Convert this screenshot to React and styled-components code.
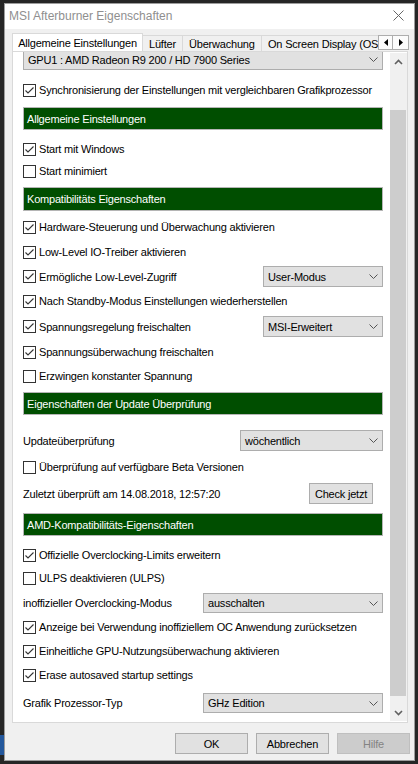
import styled, { createGlobalStyle } from 'styled-components';

const Global = createGlobalStyle`
  html, body { margin: 0; padding: 0; }
  body {
    background: #262626;
    font-family: "Liberation Sans", Arial, sans-serif;
    font-size: 11px;
    letter-spacing: -0.2px;
    color: #000;
  }
`;

function Check({ on }) {
  return (
    <Box>
      {on && (
        <svg width="11" height="11" viewBox="0 0 11 11">
          <path d="M1.5 5.5 L4 8 L9.5 2.5" fill="none" stroke="#333" strokeWidth="1.1" />
        </svg>
      )}
    </Box>
  );
}

function Chevron() {
  return (
    <svg width="9" height="5" viewBox="0 0 9 5">
      <path d="M0.5 0.5 L4.5 4.5 L8.5 0.5" fill="none" stroke="#555" strokeWidth="1" />
    </svg>
  );
}

function Select({ w, children }) {
  return (
    <SelectBox $w={w}>
      <span>{children}</span>
      <Chevron />
    </SelectBox>
  );
}

function CheckRow({ mt, on, children, right }) {
  return (
    <Row $mt={mt} $h={right ? 21 : 20}>
      <Label>
        <Check on={on} />
        {children}
      </Label>
      {right}
    </Row>
  );
}

function App() {
  return (
    <Desktop>
      <Global />
      <Gutter>
        <TaskStrip />
      </Gutter>
      <WindowFrame>
        <TitleBar>
          <span>MSI Afterburner Eigenschaften</span>
          <svg width="11" height="11" viewBox="0 0 11 11">
            <path d="M0.5 0.5 L10.5 10.5 M10.5 0.5 L0.5 10.5" stroke="#666" strokeWidth="1" />
          </svg>
        </TitleBar>
        <Body>
          <TabRow>
            <TabsViewport>
              <Tab $active $w={131}>Allgemeine Einstellungen</Tab>
              <Tab $w={40}>Lüfter</Tab>
              <Tab $w={79}>Überwachung</Tab>
              <Tab $w={130}>On Screen Display (OSD)</Tab>
            </TabsViewport>
            <TabArrows>
              <ArrowBtn>
                <svg width="4" height="7" viewBox="0 0 4 7"><path d="M4 0 L0 3.5 L4 7 Z" fill="#000" /></svg>
              </ArrowBtn>
              <ArrowBtn>
                <svg width="4" height="7" viewBox="0 0 4 7"><path d="M0 0 L4 3.5 L0 7 Z" fill="#000" /></svg>
              </ArrowBtn>
            </TabArrows>
          </TabRow>
          <Panel>
            <Content>
              <Row $mt={-3} $h={21}>
                <Select w={360}>GPU1 : AMD Radeon R9 200 / HD 7900 Series</Select>
              </Row>
              <CheckRow mt={10} on>Synchronisierung der Einstellungen mit vergleichbaren Grafikprozessor</CheckRow>
              <Header $mt={7}>Allgemeine Einstellungen</Header>
              <CheckRow mt={9} on>Start mit Windows</CheckRow>
              <CheckRow mt={2}>Start minimiert</CheckRow>
              <Header $mt={6} $h={24}>Kompatibilitäts Eigenschaften</Header>
              <CheckRow mt={6} on>Hardware-Steuerung und Überwachung aktivieren</CheckRow>
              <CheckRow mt={5} on>Low-Level IO-Treiber aktivieren</CheckRow>
              <CheckRow mt={4} on right={<Select w={120}>User-Modus</Select>}>Ermögliche Low-Level-Zugriff</CheckRow>
              <CheckRow mt={4} on>Nach Standby-Modus Einstellungen wiederherstellen</CheckRow>
              <CheckRow mt={5} on right={<Select w={120}>MSI-Erweitert</Select>}>Spannungsregelung freischalten</CheckRow>
              <CheckRow mt={5} on>Spannungsüberwachung freischalten</CheckRow>
              <CheckRow mt={4}>Erzwingen konstanter Spannung</CheckRow>
              <Header $mt={6}>Eigenschaften der Update Überprüfung</Header>
              <Row $mt={15} $h={21}>
                <Label>Updateüberprüfung</Label>
                <Select w={143}>wöchentlich</Select>
              </Row>
              <CheckRow mt={6}>Überprüfung auf verfügbare Beta Versionen</CheckRow>
              <Row $mt={6} $h={21}>
                <Label>Zuletzt überprüft am 14.08.2018, 12:57:20</Label>
                <Button $w={64} $mr={10}>Check jetzt</Button>
              </Row>
              <Header $mt={9}>AMD-Kompatibilitäts-Eigenschaften</Header>
              <CheckRow mt={9} on>Offizielle Overclocking-Limits erweitern</CheckRow>
              <CheckRow mt={3}>ULPS deaktivieren (ULPS)</CheckRow>
              <Row $mt={5} $h={20}>
                <Label>inoffizieller Overclocking-Modus</Label>
                <Select w={180}>ausschalten</Select>
              </Row>
              <CheckRow mt={4} on>Anzeige bei Verwendung inoffiziellem OC Anwendung zurücksetzen</CheckRow>
              <CheckRow mt={4} on>Einheitliche GPU-Nutzungsüberwachung aktivieren</CheckRow>
              <CheckRow mt={4} on>Erase autosaved startup settings</CheckRow>
              <Row $mt={8} $h={20}>
                <Label>Grafik Prozessor-Typ</Label>
                <Select w={180}>GHz Edition</Select>
              </Row>
            </Content>
            <ScrollBar>
              <ScrollArrow>
                <svg width="9" height="6" viewBox="0 0 9 6"><path d="M1 5 L4.5 1.5 L8 5" fill="none" stroke="#606060" strokeWidth="1.6" /></svg>
              </ScrollArrow>
              <Thumb />
              <ScrollArrow>
                <svg width="9" height="6" viewBox="0 0 9 6"><path d="M1 1 L4.5 4.5 L8 1" fill="none" stroke="#606060" strokeWidth="1.6" /></svg>
              </ScrollArrow>
            </ScrollBar>
          </Panel>
          <Footer>
            <Button $w={73}>OK</Button>
            <Button $w={73}>Abbrechen</Button>
            <Button $w={73} $disabled>Hilfe</Button>
          </Footer>
        </Body>
      </WindowFrame>
    </Desktop>
  );
}

export default App;

const Desktop = styled.div`
  display: flex;
  width: 418px;
  height: 764px;
  overflow: hidden;
  background: #262626;
`;

const Gutter = styled.div`
  width: 4px;
  flex-shrink: 0;
  display: flex;
  flex-direction: column;
`;

const TaskStrip = styled.div`
  margin-top: 735px;
  height: 20px;
  background: #24589c;
`;

const WindowFrame = styled.div`
  margin-top: 3px;
  width: 411px;
  height: 758px;
  flex-shrink: 0;
  box-sizing: border-box;
  border: 1px solid #9d9d9d;
  background: #f0f0f0;
  display: flex;
  flex-direction: column;
`;

const TitleBar = styled.div`
  height: 25px;
  background: #fff;
  display: flex;
  align-items: center;
  justify-content: space-between;
  padding: 0 10px 2px 4px;
  box-sizing: border-box;
  font-size: 12px;
  letter-spacing: 0;
  color: #8f8f8f;
`;

const Body = styled.div`
  padding: 4px 4px 0 7px;
  display: flex;
  flex-direction: column;
`;

const TabRow = styled.div`
  display: flex;
  height: 18px;
  width: 397px;
`;

const TabsViewport = styled.div`
  width: 366px;
  flex-shrink: 0;
  display: flex;
  align-items: flex-end;
  overflow: hidden;
`;

const Tab = styled.div`
  position: relative;
  z-index: 1;
  flex-shrink: 0;
  box-sizing: border-box;
  width: ${(p) => p.$w}px;
  height: ${(p) => (p.$active ? 19 : 16)}px;
  margin-bottom: ${(p) => (p.$active ? -1 : 0)}px;
  background: ${(p) => (p.$active ? '#fff' : '#f0f0f0')};
  border: 1px solid #d9d9d9;
  border-bottom: none;
  border-left: ${(p) => (p.$active ? '1px solid #d9d9d9' : 'none')};
  display: flex;
  align-items: center;
  justify-content: ${(p) => (p.$active ? 'center' : 'flex-start')};
  padding: ${(p) => (p.$active ? '0' : '0 0 0 6px')};
  white-space: nowrap;
`;

const TabArrows = styled.div`
  display: flex;
  margin-top: 2px;
  height: 15px;
`;

const ArrowBtn = styled.div`
  width: 15px;
  height: 15px;
  box-sizing: border-box;
  border: 1px solid #adadad;
  background: #fbfbfb;
  display: flex;
  align-items: center;
  justify-content: center;
  & + & { border-left: none; width: 16px; }
`;

const Panel = styled.div`
  width: 396px;
  height: 672px;
  box-sizing: border-box;
  border: 1px solid #d9d9d9;
  background: #fff;
  display: flex;
`;

const Content = styled.div`
  width: 360px;
  flex-shrink: 0;
  padding-left: 10px;
  overflow: hidden;
  display: flex;
  flex-direction: column;
`;

const Row = styled.div`
  flex-shrink: 0;
  margin-top: ${(p) => p.$mt}px;
  height: ${(p) => p.$h}px;
  display: flex;
  align-items: center;
  justify-content: space-between;
`;

const Label = styled.div`
  display: flex;
  align-items: center;
  gap: 3px;
  white-space: nowrap;
`;

const Box = styled.div`
  width: 13px;
  height: 13px;
  flex-shrink: 0;
  box-sizing: border-box;
  border: 1px solid #333;
  background: #fff;
  display: flex;
  align-items: center;
  justify-content: center;
`;

const SelectBox = styled.div`
  width: ${(p) => p.$w}px;
  flex-shrink: 0;
  height: 100%;
  box-sizing: border-box;
  border: 1px solid #adadad;
  background: #e1e1e1;
  display: flex;
  align-items: center;
  justify-content: space-between;
  padding: 0 4px 0 4px;
  white-space: nowrap;
`;

const Header = styled.div`
  flex-shrink: 0;
  margin-top: ${(p) => p.$mt}px;
  height: ${(p) => p.$h || 23}px;
  background: #004e00;
  border: 1px solid #b5b5b5;
  box-sizing: border-box;
  color: #fff;
  display: flex;
  align-items: center;
  padding-left: 3px;
`;

const Button = styled.div`
  width: ${(p) => p.$w}px;
  flex-shrink: 0;
  height: 21px;
  margin-right: ${(p) => p.$mr || 0}px;
  box-sizing: border-box;
  border: 1px solid ${(p) => (p.$disabled ? '#bfbfbf' : '#adadad')};
  background: ${(p) => (p.$disabled ? '#cccccc' : '#e1e1e1')};
  color: ${(p) => (p.$disabled ? '#838383' : '#000')};
  display: flex;
  align-items: center;
  justify-content: center;
`;

const ScrollBar = styled.div`
  width: 17px;
  flex-shrink: 0;
  margin: 1px 0 1px 7px;
  background: #f0f0f0;
  display: flex;
  flex-direction: column;
`;

const ScrollArrow = styled.div`
  height: 17px;
  flex-shrink: 0;
  display: flex;
  align-items: center;
  justify-content: center;
`;

const Thumb = styled.div`
  margin: 40px 1px 8px 0;
  flex: 1;
  background: #cdcdcd;
`;

const Footer = styled.div`
  display: flex;
  justify-content: flex-end;
  gap: 8px;
  margin-top: 10px;
`;
